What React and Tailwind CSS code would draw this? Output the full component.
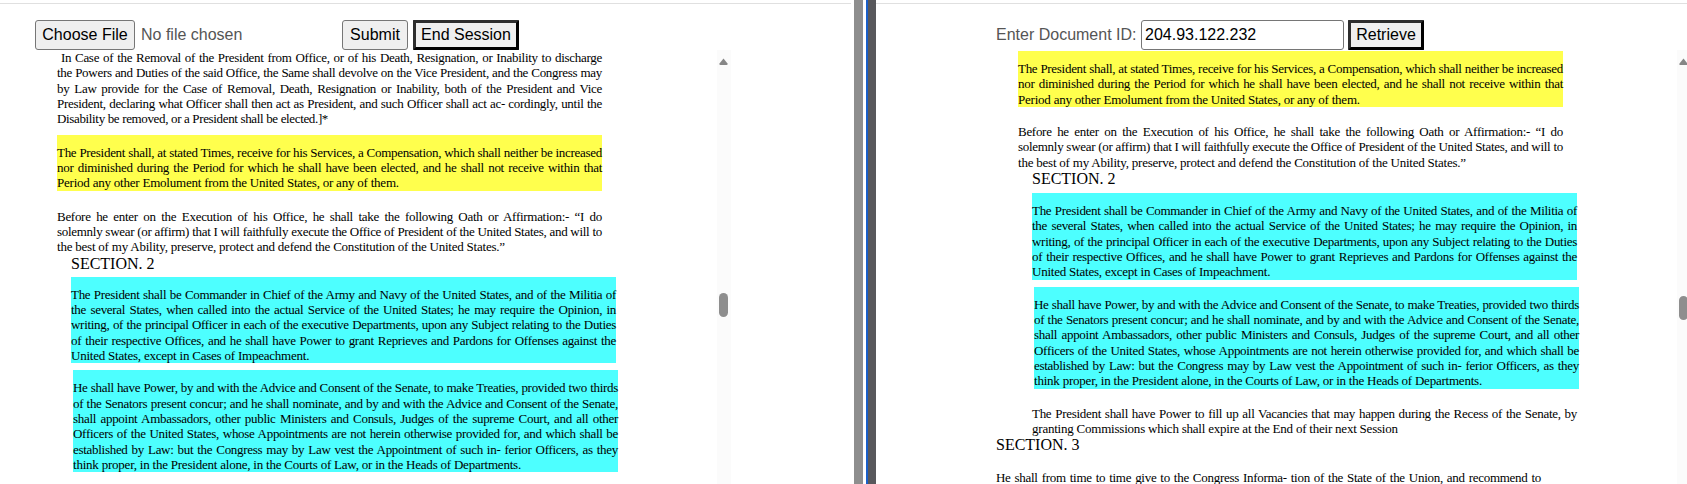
const serif = '[font-family:"Liberation_Serif","Times_New_Roman",serif]'

/* ── Small pieces ────────────────────────────────────────────────── */
function Btn({ children, className = '', focused = false }) {
  return (
    <button
      className={`h-[30px] shrink-0 bg-[#efefef] text-base text-black ${className} ${
        focused
          ? 'rounded-[1px] border-[3px] border-black border-t-[#2e2e2e] border-l-[#2e2e2e]'
          : 'rounded-[3px] border border-[#767676]'
      }`}
    >
      {children}
    </button>
  )
}

function Scrollbar({ thumbClass }) {
  return (
    <div className="w-[14px] shrink-0 bg-[#fbfbfb] flex flex-col items-start pl-[2px] pt-[8px] self-stretch">
      <svg width="9" height="7" viewBox="0 0 9 7" className="shrink-0">
        <path d="M4.5 0.5 L8.5 5.5 Q9 7 7.5 7 L1.5 7 Q0 7 0.5 5.5 Z" fill="#868686" />
      </svg>
      <div className={`w-[9px] h-[24px] shrink-0 rounded-[5px] bg-[#8e8e8e] ${thumbClass}`} />
    </div>
  )
}

/* every line is set by hand, the breaks of the screenshot don't come out of the fallback font */
function Para({ lines, className = '', lastClass = 'tracking-[-0.22px]', fullLast = false }) {
  return (
    <div className={`w-[545px] text-[13px] leading-[15.33px] tracking-[-0.29px] ${className}`}>
      {lines.map((line, i) => (
        <div
          key={i}
          className={
            i < lines.length - 1 || fullLast
              ? 'whitespace-nowrap text-justify [text-align-last:justify]'
              : `whitespace-nowrap ${lastClass}`
          }
        >
          {line}
        </div>
      ))}
    </div>
  )
}

/* ── Text shared by both panes ───────────────────────────────────── */
const COMPENSATION = [
  'The President shall, at stated Times, receive for his Services, a Compensation, which shall neither be increased',
  'nor diminished during the Period for which he shall have been elected, and he shall not receive within that',
  'Period any other Emolument from the United States, or any of them.',
]
const OATH = [
  'Before he enter on the Execution of his Office, he shall take the following Oath or Affirmation:- “I do',
  'solemnly swear (or affirm) that I will faithfully execute the Office of President of the United States, and will to',
  'the best of my Ability, preserve, protect and defend the Constitution of the United States.”',
]
const COMMANDER = [
  'The President shall be Commander in Chief of the Army and Navy of the United States, and of the Militia of',
  'the several States, when called into the actual Service of the United States; he may require the Opinion, in',
  'writing, of the principal Officer in each of the executive Departments, upon any Subject relating to the Duties',
  'of their respective Offices, and he shall have Power to grant Reprieves and Pardons for Offenses against the',
  'United States, except in Cases of Impeachment.',
]
const TREATIES = [
  'He shall have Power, by and with the Advice and Consent of the Senate, to make Treaties, provided two thirds',
  'of the Senators present concur; and he shall nominate, and by and with the Advice and Consent of the Senate,',
  'shall appoint Ambassadors, other public Ministers and Consuls, Judges of the supreme Court, and all other',
  'Officers of the United States, whose Appointments are not herein otherwise provided for, and which shall be',
  'established by Law: but the Congress may by Law vest the Appointment of such in- ferior Officers, as they',
  'think proper, in the President alone, in the Courts of Law, or in the Heads of Departments.',
]
const REMOVAL = [
  '\u00a0In Case of the Removal of the President from Office, or of his Death, Resignation, or Inability to discharge',
  'the Powers and Duties of the said Office, the Same shall devolve on the Vice President, and the Congress may',
  'by Law provide for the Case of Removal, Death, Resignation or Inability, both of the President and Vice',
  'President, declaring what Officer shall then act as President, and such Officer shall act ac- cordingly, until the',
  'Disability be removed, or a President shall be elected.]*',
]
const VACANCIES = [
  'The President shall have Power to fill up all Vacancies that may happen during the Recess of the Senate, by',
  'granting Commissions which shall expire at the End of their next Session',
]

/* ── Left pane ───────────────────────────────────────────────────── */
function LeftPane() {
  return (
    <div className="w-[854px] shrink-0 h-full flex flex-col overflow-hidden">
      <div className="mt-[3px] mr-[3px] border-t border-[#e0e0e0]" />
      <div className="flex items-center h-[30px] mt-[16px] pl-[35px] shrink-0">
        <Btn className="w-[100px]">Choose File</Btn>
        <span className="ml-[6px] w-[201px] text-base text-[#555]">No file chosen</span>
        <Btn className="w-[66px]">Submit</Btn>
        <Btn focused className="ml-[5px] w-[106px]">End Session</Btn>
      </div>
      <div className="flex flex-1 min-h-0">
        <div className={`w-[717px] shrink-0 overflow-hidden text-black ${serif}`}>
          <Para className="ml-[57px]" lastClass="tracking-[-0.35px]" lines={REMOVAL} />
          <Para className="ml-[57px] mt-[8px] pt-[10px] bg-[#ffff4d]" lines={COMPENSATION} />
          <Para className="ml-[57px] mt-[18px]" lines={OATH} />
          <div className="ml-[71px] text-base leading-[18px]">SECTION. 2</div>
          <Para className="ml-[71px] mt-[4px] pt-[10px] bg-[#4dffff]" lines={COMMANDER} />
          <Para className="ml-[73px] mt-[7px] pt-[10px] bg-[#4dffff]" lines={TREATIES} />
        </div>
        <Scrollbar thumbClass="mt-[228px]" />
      </div>
    </div>
  )
}

/* ── Divider between panes ───────────────────────────────────────── */
function Divider() {
  return (
    <div className="flex shrink-0 h-full">
      <div className="w-[9px] bg-[#8e8e8e]" />
      <div className="w-[3px] bg-white" />
      <div className="w-[2px] bg-[#1a5fc8]" />
      <div className="w-[8px] bg-[#58585c]" />
    </div>
  )
}

/* ── Right pane ──────────────────────────────────────────────────── */
function RightPane() {
  return (
    <div className="flex-1 min-w-0 h-full flex flex-col overflow-hidden">
      <div className="mt-[3px] border-t border-[#e0e0e0]" />
      <div className="flex items-center h-[30px] mt-[16px] pl-[120px] shrink-0">
        <label className="w-[145px] shrink-0 text-base text-[#555]">Enter Document ID:</label>
        <input
          readOnly
          value="204.93.122.232"
          className="w-[203px] h-[30px] shrink-0 rounded-[3px] border border-[#767676] bg-white px-[3px] text-base text-black"
        />
        <Btn focused className="ml-[4px] w-[76px]">Retrieve</Btn>
      </div>
      <div className="flex flex-1 min-h-0">
        <div className={`w-[801px] shrink-0 overflow-hidden text-black ${serif}`}>
          <Para className="ml-[142px] mt-px pt-[10px] bg-[#ffff4d]" lines={COMPENSATION} />
          <Para className="ml-[142px] mt-[17px]" lines={OATH} />
          <div className="ml-[156px] text-base leading-[18px]">SECTION. 2</div>
          <Para className="ml-[156px] mt-[5px] pt-[10px] bg-[#4dffff]" lines={COMMANDER} />
          <Para className="ml-[158px] mt-[7px] pt-[10px] bg-[#4dffff]" lines={TREATIES} />
          <Para className="ml-[156px] mt-[17px]" lines={VACANCIES} />
          <div className="ml-[120px] text-base leading-[18px]">SECTION. 3</div>
          <Para
            className="ml-[120px] mt-[16px]"
            fullLast
            lines={['He shall from time to time give to the Congress Informa- tion of the State of the Union, and recommend to']}
          />
        </div>
        <Scrollbar thumbClass="mt-[231px]" />
      </div>
    </div>
  )
}

export default function App() {
  return (
    <div className="flex w-[1687px] h-[484px] overflow-hidden bg-white [font-family:'Liberation_Sans',Arial,sans-serif]">
      <LeftPane />
      <Divider />
      <RightPane />
    </div>
  )
}
